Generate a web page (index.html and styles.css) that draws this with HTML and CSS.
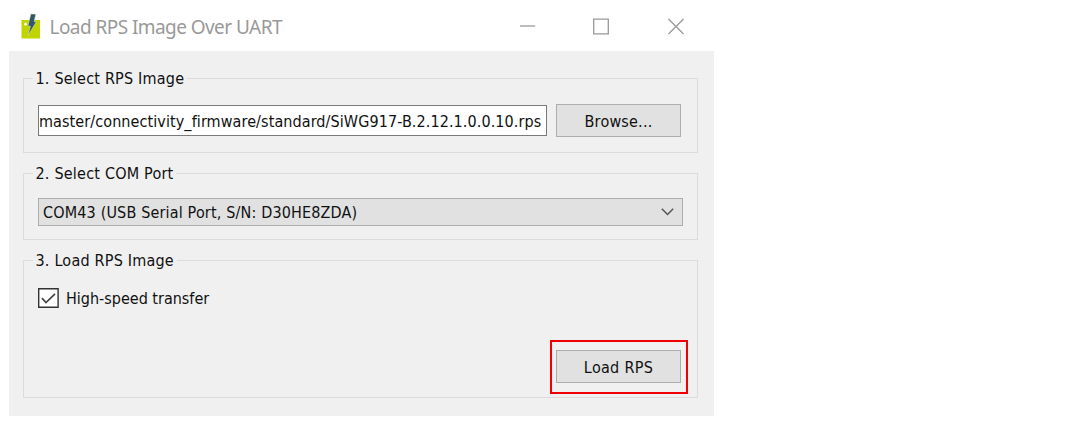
FILE: index.html
```html
<!DOCTYPE html>
<html lang="en">
<head>
<meta charset="utf-8">
<title>Load RPS Image Over UART</title>
<link rel="stylesheet" href="styles.css">
</head>
<body>
<main class="window">
  <header class="titlebar">
    <svg class="app-icon" width="20" height="26" viewBox="0 0 20 26">
      <path fill="#c0d500" d="M0.5 7h18.5v18.5h-18.5z"/>
      <circle cx="4.5" cy="11.2" r="1.4" fill="#fff"/>
      <path fill="#2f5570" stroke="#dce69a" stroke-width=".6" d="M9.8 1h5l-1.6 7.6h2.3L7 22.5l2.4-9.3H6.9z"/>
    </svg>
    <h1 class="title">Load RPS Image Over UART</h1>
    <div class="controls">
      <svg width="16" height="17" viewBox="0 0 16 17"><path d="M0 8h15.2" /></svg>
      <svg width="16" height="17" viewBox="0 0 16 17"><path d="M.7 1.2h14.6v14.6H.7z"/></svg>
      <svg width="16" height="17" viewBox="0 0 16 17"><path d="M.5 1l15 15M15.5 1l-15 15"/></svg>
    </div>
  </header>
  <section class="content">
    <fieldset class="group group-image">
      <legend class="legend-image">1. Select RPS Image</legend>
      <div class="row">
        <div class="path-field"><span class="path-text">master/connectivity_firmware/standard/SiWG917-B.2.12.1.0.0.10.rps</span></div>
        <button class="button"><span class="browse-text">Browse...</span></button>
      </div>
    </fieldset>
    <fieldset class="group group-port">
      <legend class="legend-port">2. Select COM Port</legend>
      <div class="combo">
        <span class="combo-text">COM43 (USB Serial Port, S/N: D30HE8ZDA)</span>
        <svg width="13" height="8" viewBox="0 0 13 8"><path d="M.8 .8L6.5 6.5 12.2 .8"/></svg>
      </div>
    </fieldset>
    <fieldset class="group group-load">
      <legend class="legend-load">3. Load RPS Image</legend>
      <label class="check">
        <svg width="21" height="20" viewBox="0 0 21 20"><path class="box" d="M.7 .7h19.4v18.6H.7z"/><path class="tick" d="M4 10.2l4 4.3L17 5.8"/></svg>
        <span class="check-text">High-speed transfer</span>
      </label>
      <div class="highlight"><button class="button"><span class="load-text">Load RPS</span></button></div>
    </fieldset>
  </section>
</main>
</body>
</html>
```
FILE: styles.css
```css
* { box-sizing: border-box; }
body {
  margin: 0;
  background: #fff;
  color: #111;
  font: 16px/20px "DejaVu Sans Condensed", "DejaVu Sans", sans-serif;
  font-stretch: condensed;
  font-variant-ligatures: none;
  white-space: nowrap;
}
.window { width: 705px; height: 416px; margin-left: 9px; }
.titlebar { display: flex; height: 51px; padding: 13px 30px 0 12px; }
.app-icon { flex: none; }
.title {
  margin: 1px 0 0 8.5px;
  color: #999;
  font: 400 19px/26px "Noto Sans", sans-serif;
  letter-spacing: -.56px;
}
.controls { display: flex; gap: 58px; margin: 5px 0 0 auto; }
.controls svg { fill: none; stroke: #999; stroke-width: 1.3; }
.controls svg:nth-child(2) { margin: 0 1px 0 -1px; }
.content { height: 365px; padding: 17px 16px 0 14px; background: #f0f0f0; }
.group {
  min-width: 0;
  margin: 0;
  padding: 0 15px 0 14px;
  border: 1px solid #dcdcdc;
}
.group legend { height: 20px; margin-left: -5px; padding: 1px 3px 0 2.5px; letter-spacing: .21px; }
.group-image { height: 85px; }
.group-port { height: 77px; margin-top: 10px; }
.group-load { height: 148px; margin-top: 10px; }
.row { display: flex; gap: 9px; align-items: center; margin-top: 16px; }
.path-field {
  flex: none;
  display: flex;
  align-items: center;
  width: 509px;
  height: 31px;
  overflow: hidden;
  border: 1px solid #7a7a7a;
  background: #fff;
}
.path-text { padding-top: 2px; letter-spacing: .09px; }
.browse-text { letter-spacing: .2px; }
.load-text { letter-spacing: .3px; }
.combo-text { padding-top: 2px; letter-spacing: .16px; }
.check-text { padding-top: 2px; }
.button {
  flex: none;
  width: 125px;
  height: 33px;
  padding: 2px 0 0;
  border: 1px solid #adadad;
  background: #e1e1e1;
  color: inherit;
  font: inherit;
}
.combo {
  display: flex;
  align-items: center;
  justify-content: space-between;
  width: 645px;
  height: 28px;
  margin-top: 15px;
  padding: 0 8px 0 4px;
  border: 1px solid #adadad;
  background: #e1e1e1;
}
.combo svg { fill: none; stroke: #555; stroke-width: 1.5; }
.check { display: flex; gap: 7px; align-items: center; width: max-content; height: 20px; margin-top: 18px; }
.box { fill: #fff; stroke: #333; stroke-width: 1.4; }
.tick { fill: none; stroke: #444; stroke-width: 1.7; }
.highlight {
  display: flex;
  align-items: center;
  justify-content: center;
  width: 138px;
  height: 54px;
  margin: 32px -6px 0 auto;
  padding-right: 1px;
  border: 2px solid #f00000;
}
.highlight .button { margin-top: -1px; }
```
